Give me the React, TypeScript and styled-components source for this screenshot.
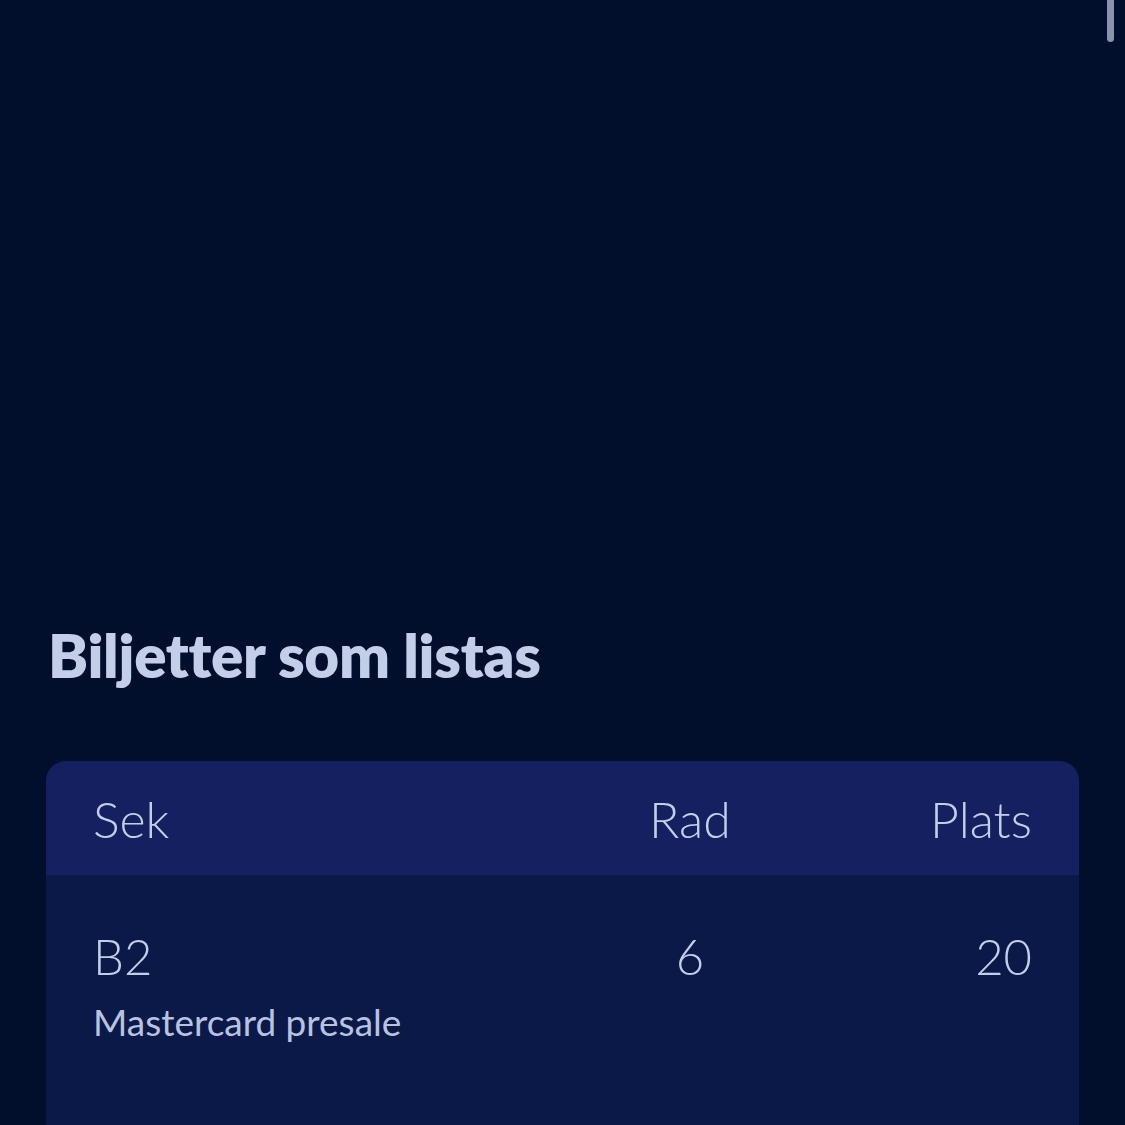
import React from 'react';
import styled, { createGlobalStyle } from 'styled-components';

const GlobalStyle = createGlobalStyle`
  html, body {
    margin: 0;
    padding: 0;
    background: #010e2c;
    overflow: hidden;
  }
  body {
    font-family: Lato, "Open Sans", sans-serif;
    color: #c3cee9;
  }
`;

const Page = styled.div`
  min-height: 1125px;
  padding: 619px 46px 0 46px;
  box-sizing: border-box;
  position: relative;
`;

const Title = styled.h1`
  margin: 0 0 70px 2px;
  font-size: 60px;
  line-height: 1.2;
  font-weight: 800;
  letter-spacing: -0.3px;
  color: #c3cee9;
`;

const Card = styled.div`
  border-radius: 20px 20px 0 0;
  overflow: hidden;
  background: #0b1948;
  width: 1033px;
`;

const Grid = styled.div<{ $head?: boolean }>`
  display: grid;
  grid-template-columns: 1fr 228px 228px;
  padding: ${p => (p.$head ? '28px 47px 26px' : '52px 47px 120px')};
  background: ${p => (p.$head ? '#142060' : '#0b1948')};
`;

const Cell = styled.div<{ $align?: 'left' | 'center' | 'right'; $size?: number }>`
  font-size: ${p => p.$size ?? 50}px;
  line-height: 1.2;
  font-weight: 300;
  text-align: ${p => p.$align ?? 'left'};
  color: #c3cee9;
`;

const Sub = styled.div`
  margin-top: 14px;
  font-size: 37px;
  line-height: 1.2;
  font-weight: 400;
  color: #b8c3e0;
`;

const Scrollbar = styled.div`
  position: absolute;
  top: 0;
  right: 11px;
  width: 7px;
  height: 42px;
  border-radius: 0 0 4px 4px;
  background: #8b93ac;
`;

export default function App() {
  return (
    <>
      <GlobalStyle />
      <Page>
        <Title>Biljetter som listas</Title>
        <Card>
          <Grid $head>
            <Cell>Sek</Cell>
            <Cell $align="center">Rad</Cell>
            <Cell $align="right">Plats</Cell>
          </Grid>
          <Grid>
            <div>
              <Cell $size={49}>B2</Cell>
              <Sub>Mastercard presale</Sub>
            </div>
            <Cell $size={49} $align="center">6</Cell>
            <Cell $size={49} $align="right">20</Cell>
          </Grid>
        </Card>
        <Scrollbar />
      </Page>
    </>
  );
}
